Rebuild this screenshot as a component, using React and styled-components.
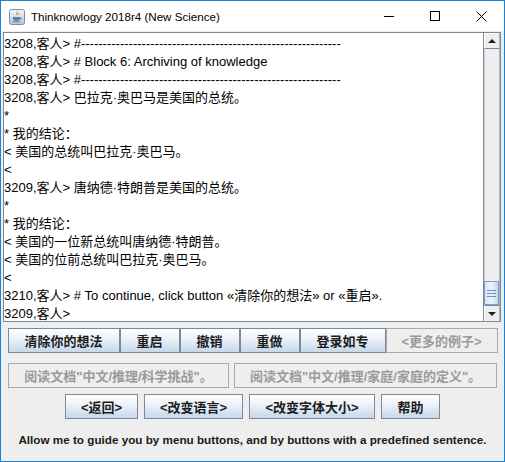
import React from "react";
import styled, { createGlobalStyle } from "styled-components";

const GlobalStyle = createGlobalStyle`
  html, body {
    margin: 0;
    padding: 0;
    background: #ffffff;
  }
  * {
    box-sizing: border-box;
  }
`;

const dashes = "-".repeat(60);

const lines = [
  `3208,客人> #${dashes}`,
  "3208,客人> # Block 6: Archiving of knowledge",
  `3208,客人> #${dashes}`,
  "3208,客人> 巴拉克·奥巴马是美国的总统。",
  "*",
  "* 我的结论：",
  "< 美国的总统叫巴拉克·奥巴马。",
  "<",
  "3209,客人> 唐纳德·特朗普是美国的总统。",
  "*",
  "* 我的结论：",
  "< 美国的一位新总统叫唐纳德·特朗普。",
  "< 美国的位前总统叫巴拉克·奥巴马。",
  "<",
  "3210,客人> # To continue, click button «清除你的想法» or «重启».",
  "3209,客人>",
];

const menuButtons = [
  { label: "清除你的想法", w: 112 },
  { label: "重启", w: 60 },
  { label: "撤销", w: 60 },
  { label: "重做", w: 60 },
  { label: "登录如专", w: 86 },
  { label: "<更多的例子>", w: 112, disabled: true },
];

const docButtons = [
  { label: "阅读文档\"中文/推理/科学挑战\"。", w: 221 },
  { label: "阅读文档\"中文/推理/家庭/家庭的定义\"。", w: 263 },
];

const navButtons = [
  { label: "<返回>", w: 73 },
  { label: "<改变语言>", w: 99 },
  { label: "<改变字体大小>", w: 126 },
  { label: "帮助", w: 59 },
];

const JavaIcon = () => (
  <svg width="16" height="16" viewBox="0 0 16 16">
    <defs>
      <linearGradient id="jbg" x1="0" y1="0" x2="0" y2="1">
        <stop offset="0" stopColor="#f4f7fa" />
        <stop offset="1" stopColor="#b9c6d3" />
      </linearGradient>
    </defs>
    <rect x="0.5" y="0.5" width="15" height="15" rx="2" fill="url(#jbg)" stroke="#7d8da0" />
    <path d="M8 2.5c-1.5 1.2 1.2 1.8 -0.3 3.3M9.6 3.6c-1 0.8 0.8 1.2 -0.2 2.2" stroke="#e07a1f" strokeWidth="1" fill="none" />
    <path d="M4 8h7v1.5c0 1.6-1.4 2.5-3.5 2.5S4 11.1 4 9.5z" fill="#5b7fb0" />
    <path d="M11 8.6h1c0.8 0 0.8 1.6 0 1.6h-1" stroke="#5b7fb0" strokeWidth="0.8" fill="none" />
    <path d="M3.5 12.8h8" stroke="#5b7fb0" strokeWidth="1" />
  </svg>
);

const App = () => {
  return (
    <>
      <GlobalStyle />
      <Window>
        <TitleBar>
          <TitleIcon>
            <JavaIcon />
          </TitleIcon>
          <TitleText>Thinknowlogy 2018r4 (New Science)</TitleText>
          <Controls>
            <ControlButton>
              <svg width="10" height="10" viewBox="0 0 10 10">
                <path d="M0 5.5h10" stroke="#000" strokeWidth="1" />
              </svg>
            </ControlButton>
            <ControlButton>
              <svg width="10" height="10" viewBox="0 0 10 10">
                <rect x="0.5" y="0.5" width="9" height="9" fill="none" stroke="#000" strokeWidth="1" />
              </svg>
            </ControlButton>
            <ControlButton>
              <svg width="11" height="11" viewBox="0 0 11 11">
                <path d="M0.5 0.5l10 10M10.5 0.5l-10 10" stroke="#000" strokeWidth="1" />
              </svg>
            </ControlButton>
          </Controls>
        </TitleBar>

        <Content>
          <ScrollPane>
            <TextArea>
              {lines.map((l, idx) => (
                <Line key={idx}>{l}</Line>
              ))}
            </TextArea>
            <ScrollBar>
              <ArrowButton>
                <Arrow up />
              </ArrowButton>
              <Track>
                <Thumb>
                  <Grip />
                  <Grip />
                  <Grip />
                </Thumb>
              </Track>
              <ArrowButton bottom>
                <Arrow />
              </ArrowButton>
            </ScrollBar>
          </ScrollPane>

          <ButtonRow top={6} gap={0}>
            {menuButtons.map((b) => (
              <Button key={b.label} w={b.w} disabled={b.disabled}>
                {b.label}
              </Button>
            ))}
          </ButtonRow>

          <ButtonRow top={10} gap={5}>
            {docButtons.map((b) => (
              <Button key={b.label} w={b.w} disabled>
                {b.label}
              </Button>
            ))}
          </ButtonRow>

          <ButtonRow top={6} gap={6}>
            {navButtons.map((b) => (
              <Button key={b.label} w={b.w}>
                {b.label}
              </Button>
            ))}
          </ButtonRow>

          <Footer>
            Allow me to guide you by menu buttons, and by buttons with a predefined sentence.
          </Footer>
        </Content>
      </Window>
    </>
  );
};

const Window = styled.div`
    width: 505px;
    height: 462px;
    border: 1px solid #1a83d8;
    display: flex;
    flex-direction: column;
    background: #eeeeee;
`;

const TitleBar = styled.div`
    height: 30px;
    background: #ffffff;
    display: flex;
    align-items: center;
    flex-shrink: 0;
`;

const TitleIcon = styled.div`
    width: 16px;
    height: 16px;
    margin-left: 8px;
    margin-top: 1px;
    display: flex;
`;

const TitleText = styled.div`
    margin-left: 6px;
    font-family: "Liberation Sans", Arial, sans-serif;
    font-size: 11.6px;
    color: #000000;
`;

const Controls = styled.div`
    margin-left: auto;
    display: flex;
    height: 100%;
`;

const ControlButton = styled.div`
    width: 46px;
    height: 30px;
    display: flex;
    align-items: center;
    justify-content: center;
`;

const Content = styled.div`
    flex: 1;
    display: flex;
    flex-direction: column;
    align-items: center;
`;

const ScrollPane = styled.div`
    margin-top: 1px;
    align-self: flex-start;
    margin-left: 2px;
    width: 498px;
    height: 290px;
    border: 1px solid #7a8a99;
    display: flex;
    background: #ffffff;
`;

const TextArea = styled.div`
    flex: 1;
    overflow: hidden;
    padding: 2px 0 0 0;
    font-family: "Liberation Sans", Arial, "Noto Sans CJK SC", sans-serif;
    font-size: 13px;
    color: #000000;
`;

const Line = styled.div`
    height: 18px;
    line-height: 18px;
    white-space: pre;
`;

const ScrollBar = styled.div`
    width: 17px;
    display: flex;
    flex-direction: column;
    border-left: 1px solid #7a8a99;
    border-right: 1px solid #a6b4c2;
    background: #eeeeee;
`;

const ArrowButton = styled.div`
    height: 16px;
    flex-shrink: 0;
    display: flex;
    align-items: center;
    justify-content: center;
    background: #eeeeee;
    border-top: ${(p) => (p.bottom ? "1px solid #7a8a99" : "1px solid #ffffff")};
    border-bottom: ${(p) => (p.bottom ? "none" : "1px solid #7a8a99")};
    border-left: 1px solid #ffffff;
`;

const Arrow = styled.div`
    width: 0;
    height: 0;
    border-left: 4px solid transparent;
    border-right: 4px solid transparent;
    ${(p) =>
      p.up
        ? "border-bottom: 4px solid #1f1f1f;"
        : "border-top: 4px solid #1f1f1f;"}
`;

const Track = styled.div`
    flex: 1;
    display: flex;
    flex-direction: column;
    justify-content: flex-end;
    background: #eeeeee;
    border-left: 1px solid #c8d2dc;
`;

const Thumb = styled.div`
    height: 24px;
    margin-left: -1px;
    background: linear-gradient(to right, #d5e3f2, #eef4fa 45%, #c5d8ec);
    border: 1px solid #7a9ccf;
    display: flex;
    flex-direction: column;
    align-items: center;
    justify-content: center;
    gap: 2px;
`;

const Grip = styled.div`
    width: 9px;
    height: 1px;
    background: #6d8fc4;
`;

const ButtonRow = styled.div`
    margin-top: ${(p) => p.top}px;
    display: flex;
    justify-content: center;
    gap: ${(p) => p.gap}px;
`;

const Button = styled.div`
    width: ${(p) => p.w}px;
    height: 25px;
    display: flex;
    align-items: center;
    justify-content: center;
    font-family: "Liberation Sans", Arial, "Noto Sans CJK SC", sans-serif;
    font-size: 13px;
    font-weight: bold;
    white-space: nowrap;
    color: ${(p) => (p.disabled ? "#9a9a9a" : "#1c1c1c")};
    border: 1px solid ${(p) => (p.disabled ? "#a9a9a9" : "#7a8a99")};
    background: ${(p) =>
      p.disabled
        ? "#eeeeee"
        : "linear-gradient(to bottom, #ffffff 0%, #edf3f9 40%, #c6d7ea 100%)"};
`;

const Footer = styled.div`
    margin-top: 14px;
    font-family: "Liberation Sans", Arial, sans-serif;
    font-size: 11.7px;
    font-weight: bold;
    color: #1a1a1a;
    line-height: 14px;
`;

export default App;
